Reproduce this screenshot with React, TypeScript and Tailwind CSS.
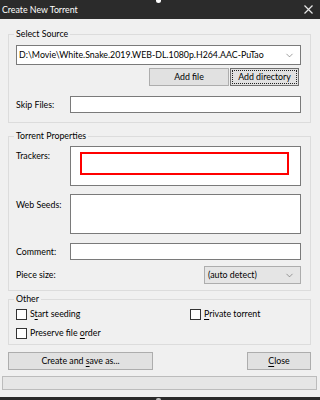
import { ChevronDown } from 'lucide-react';

const Btn = ({ children, className = '' }: { children: React.ReactNode; className?: string }) => (
  <div className={`h-[18px] bg-[#e1e1e1] border border-[#adadad] flex items-center justify-center ${className}`}>
    {children}
  </div>
);

const Check = ({ label, className = '' }: { label: [string, string, string]; className?: string }) => (
  <div className={`flex items-center gap-[3px] ${className}`}>
    <div className="w-[11px] h-[11px] border border-[#333] bg-white" />
    <span className="whitespace-nowrap">
      {label[0]}
      <span className="underline underline-offset-2">{label[1]}</span>
      {label[2]}
    </span>
  </div>
);

const App = () => {
  return (
    <div className="relative w-[320px] h-[400px] bg-[#f0f0f0] flex flex-col overflow-hidden text-[8.8px] leading-[14px] text-black font-['Lato',sans-serif]">
      {/* title bar */}
      <div className="h-[19px] bg-[#2b2b2b] flex items-center justify-between pl-[2px] pr-[7px] text-white shrink-0">
        <span>Create New Torrent</span>
        <svg width="9" height="9" viewBox="0 0 9 9" className="text-[#e6e6e6]">
          <path d="M0.5 0.5L8.5 8.5M8.5 0.5L0.5 8.5" stroke="currentColor" strokeWidth="1.2" />
        </svg>
      </div>
      <div className="absolute left-[156px] top-0 w-[5px] h-[3px] rounded-b-full bg-white" />

      <div className="flex flex-col px-[8px] pr-[9px] pt-[7px]">
        {/* Select Source */}
        <fieldset className="min-w-0 border border-[#dcdcdc] px-[7px] pr-[9px] pb-[9px]">
          <legend className="px-[2px] -ml-[2px] leading-[16px]">Select Source</legend>
          <div className="mt-[3px] h-[20px] bg-white border border-[#7a7a7a] flex items-center pl-[2px] pr-[5px] overflow-hidden">
            <span className="whitespace-nowrap">D:\Movie\White.Snake.2019.WEB-DL.1080p.H264.AAC-PuTao</span>
            <ChevronDown className="ml-auto shrink-0 text-[#606060]" size={11} strokeWidth={1.3} />
          </div>
          <div className="flex justify-end gap-[1px] mt-[3px] pr-[2px]">
            <Btn className="w-[80px]">Add file</Btn>
            <div className="w-[69px] h-[18px] bg-[#e1e1e1] border border-[#6f6f6f] p-[1px] flex">
              <div className="flex-1 border border-dotted border-[#222] flex items-center justify-center whitespace-nowrap">
                Add directory
              </div>
            </div>
          </div>
          <div className="flex items-center mt-[10px]">
            <span className="w-[54px] shrink-0 whitespace-nowrap">Skip Files:</span>
            <div className="flex-1 h-[17px] bg-white border border-[#7a7a7a]" />
          </div>
        </fieldset>

        {/* Torrent Properties */}
        <fieldset className="min-w-0 mt-[5px] border border-[#dcdcdc] px-[7px] pr-[9px] pb-[6px]">
          <legend className="px-[2px] -ml-[2px] leading-[16px]">Torrent Properties</legend>
          <div className="flex mt-[2px]">
            <span className="w-[54px] shrink-0 pt-[3px] whitespace-nowrap">Trackers:</span>
            <div className="flex-1 h-[40px] bg-white border border-[#7a7a7a] pl-[9px] pr-[11px] pt-[5px]">
              <div className="h-[23px] border-2 border-[#ff0000]" />
            </div>
          </div>
          <div className="flex mt-[8px]">
            <span className="w-[54px] shrink-0 pt-[4px] whitespace-nowrap">Web Seeds:</span>
            <div className="flex-1 h-[40px] bg-white border border-[#7a7a7a]" />
          </div>
          <div className="flex items-center mt-[9px]">
            <span className="w-[54px] shrink-0 whitespace-nowrap">Comment:</span>
            <div className="flex-1 h-[17px] bg-white border border-[#7a7a7a]" />
          </div>
          <div className="flex items-center mt-[6px]">
            <span>Piece size:</span>
            <div className="ml-auto w-[97px] h-[18px] bg-[#e5e5e5] border border-[#adadad] flex items-center pl-[3px] pr-[5px]">
              <span>(auto detect)</span>
              <ChevronDown className="ml-auto text-[#606060]" size={11} strokeWidth={1.3} />
            </div>
          </div>
        </fieldset>

        {/* Other */}
        <fieldset className="min-w-0 mt-[1px] border border-[#dcdcdc] px-[7px] pb-[4px]">
          <legend className="px-[2px] -ml-[2px] leading-[14px]">Other</legend>
          <div className="flex mt-[1px]">
            <Check className="w-[174px]" label={['S', 't', 'art seeding']} />
            <Check label={['', 'P', 'rivate torrent']} />
          </div>
          <Check className="mt-[5px]" label={['Preserve file ', 'o', 'rder']} />
        </fieldset>

        <div className="flex justify-between mt-[7px]">
          <Btn className="w-[145px]">
            <span>
              Create and <span className="underline underline-offset-2">s</span>ave as...
            </span>
          </Btn>
          <Btn className="w-[64px]">
            <span>
              <span className="underline underline-offset-2">C</span>lose
            </span>
          </Btn>
        </div>
      </div>

      <div className="mt-auto mx-[2px] mr-[3px] mb-[7px] h-[14px] bg-[#e6e6e6] border border-[#bcbcbc] shrink-0" />
      <div className="h-[3px] bg-[#2b2b2b] shrink-0" />
      <div className="absolute left-[156px] bottom-0 w-[5px] h-[2px] rounded-t-full bg-[#bdbdbd]" />
    </div>
  );
};

export default App;
